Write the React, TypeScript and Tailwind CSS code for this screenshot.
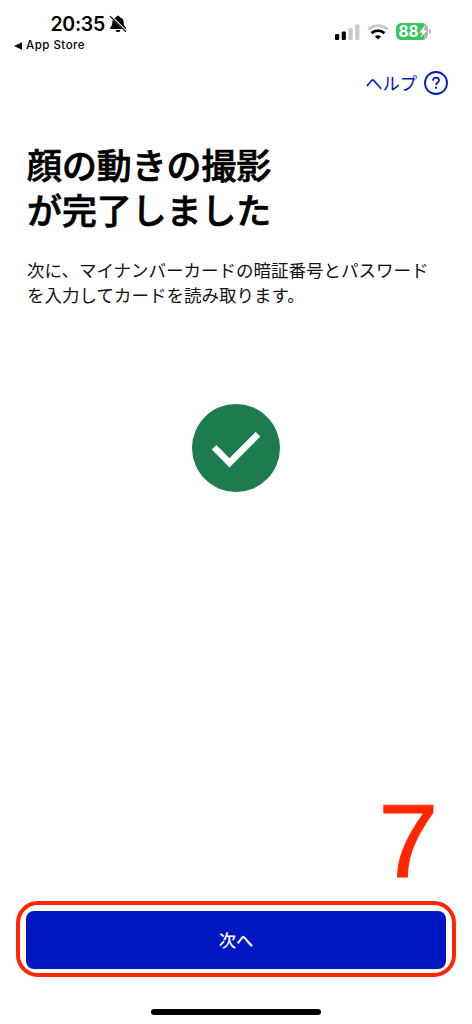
import React from 'react';

const SilentBell: React.FC = () => (
  <svg width="18" height="18" viewBox="0 0 18 18" fill="none">
    <path
      d="M9 .8c-1.100 0-1.700.6-1.800 1.500C4.700 3 3.400 4.900 3.300 7.300c-.1 2.600-.6 3.500-1.900 4.900-.7.800-.4 1.700.5 1.700h14.200c.9 0 1.200-.9.5-1.700-1.300-1.400-1.800-2.300-1.900-4.900-.1-2.400-1.400-4.300-3.900-5C10.700 1.400 10.100.8 9 .8Z"
      fill="#000"
    />
    <path d="M6.600 14.900h4.800c-.2 1.300-1.100 2.100-2.400 2.100s-2.200-.8-2.400-2.100Z" fill="#000" />
    <path d="M1.700 1.100 17.200 16.300" stroke="#fff" strokeWidth="2.200" />
    <path d="M1.300 1.300 16.700 16.500" stroke="#000" strokeWidth="1.100" strokeLinecap="round" />
  </svg>
);

const SignalBars: React.FC = () => (
  <svg width="25" height="16" viewBox="0 0 25 16">
    <rect x="0" y="10" width="4.200" height="6" rx="1.200" fill="#000" />
    <rect x="6.700" y="7.500" width="4.200" height="8.500" rx="1.200" fill="#000" />
    <rect x="13.500" y="4" width="4.200" height="12" rx="1.200" fill="#c8c8c8" />
    <rect x="20.200" y="0.500" width="4.200" height="15.500" rx="1.200" fill="#c8c8c8" />
  </svg>
);

const Wifi: React.FC = () => (
  <svg width="22" height="16" viewBox="0 0 22 16" fill="none">
    <path d="M1.300 5.400C6.700.4 15.300.4 20.700 5.400" stroke="#c8c8c8" strokeWidth="3" />
    <path d="M4.600 9.100c3.600-3.300 9.200-3.300 12.800 0" stroke="#000" strokeWidth="2.800" />
    <path d="M11 15.600 7.900 12.500c1.700-1.600 4.500-1.600 6.200 0L11 15.600Z" fill="#000" />
  </svg>
);

const Battery: React.FC = () => (
  <div className="flex items-center">
    <div className="flex h-[17px] w-[32px] items-center overflow-hidden rounded-[5.5px] bg-[linear-gradient(to_right,#35c759_88%,#b4b4b4_88%)] pl-[2.5px]">
      <span className="text-[15.500px] leading-none font-bold text-white">88</span>
      <svg width="8" height="13" viewBox="0 0 8 13" className="shrink-0">
        <path d="M5.800.4.300 7.400h3L2 12.600 7.900 5.400H4.700L5.800.4Z" fill="#fff" />
      </svg>
    </div>
    <div className="ml-px h-[5px] w-[2px] rounded-r-full bg-[#b4b4b4]" />
  </div>
);

const StatusBar: React.FC = () => (
  <header className="flex h-[63px] justify-between font-['Inter',sans-serif] text-black">
    <div className="pt-[12px] pl-[14px]">
      <div className="flex h-6 items-center pl-[36.500px]">
        <span className="w-[58px] text-[19.500px] leading-6 font-semibold tracking-[-0.3px]">20:35</span>
        <SilentBell />
      </div>
      <div className="flex h-[19px] items-center gap-[4px]">
        <svg width="8" height="8" viewBox="0 0 8 8">
          <path d="M0 4 8 .2v7.600L0 4Z" fill="#000" />
        </svg>
        <span className="text-[11.500px] font-medium tracking-[0.500px]">App Store</span>
      </div>
    </div>
    <div className="mt-[23px] flex h-[17px] items-center pr-[41px]">
      <SignalBars />
      <div className="mr-[7px] ml-[7px]">
        <Wifi />
      </div>
      <Battery />
    </div>
  </header>
);

const App: React.FC = () => {
  return (
    <div className="flex h-[1024px] w-[472px] flex-col bg-white font-['Noto_Sans_CJK_JP',sans-serif] text-[#111]">
      <StatusBar />

      <button className="mr-[24px] flex h-[40px] items-center gap-[7px] self-end text-[17.300px] text-[#0017c1]">
        <span>ヘルプ</span>
        <svg width="24" height="24" viewBox="0 0 24 24" fill="none" stroke="#0017c1">
          <circle cx="12" cy="12" r="11" strokeWidth="1.800" />
          <path d="M9 9.600c.1-1.900 1.300-2.900 3-2.900s3 1 3 2.600c0 2.100-2.900 2.300-2.900 4.700" strokeWidth="1.700" />
          <circle cx="12.100" cy="16.700" r="1.100" fill="#0017c1" stroke="none" />
        </svg>
      </button>

      <main className="flex flex-1 flex-col px-[26px] pt-[39px]">
        <h1 className="ml-px text-[34.900px] leading-[45px] font-medium text-black [-webkit-text-stroke:0.7px_#000]">
          <span className="block h-[45px]">顔の動きの撮影</span>
          <span className="block h-[45px]">が完了しました</span>
        </h1>
        <p className="mt-[25px] ml-px text-[17.500px] leading-[25px] whitespace-nowrap">
          次に、マイナンバーカードの暗証番号とパスワード
          <br />
          を入力してカードを読み取ります。
        </p>
        <svg width="88" height="88" viewBox="0 0 88 88" fill="none" className="mt-[97px] self-center">
          <circle cx="44" cy="44" r="44" fill="#1c7c4d" />
          <path d="m22.100 43.300 15.400 15.600L66 30.300" stroke="#fff" strokeWidth="6.500" />
        </svg>
      </main>

      <div className="mr-[34px] mb-[9px] origin-right scale-x-105 self-end font-['Liberation_Sans',sans-serif] text-[103px] leading-[100px] text-[#ff2600] [-webkit-text-stroke:0.8px_#ff2600]">
        7
      </div>

      <div className="mx-[16px] mb-[32px] flex h-[76px] rounded-[22px] border-4 border-[#ff2600] px-[6px] pt-[6px] pb-[4px]">
        <button className="flex-1 rounded-[8px] bg-[#0017c1] text-[17.300px] font-medium text-white">次へ</button>
      </div>

      <div className="mb-[9px] h-[6px] w-[170px] self-center rounded-full bg-black" />
    </div>
  );
};

export default App;
